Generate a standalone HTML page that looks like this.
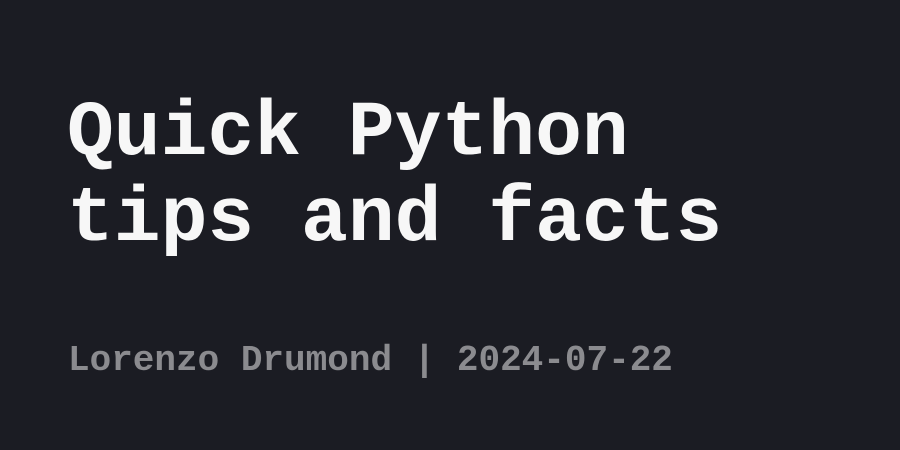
<!DOCTYPE html>
<html><head><meta charset="utf-8"><style>
html,body{margin:0;padding:0;}
body{width:900px;height:450px;background:#1b1c23;position:relative;overflow:hidden;font-family:"Liberation Mono",monospace;font-weight:bold;}
.t{position:absolute;left:67px;top:91px;font-size:78px;line-height:86px;color:#f7f7f7;white-space:pre;}
.s{position:absolute;left:68px;top:343px;font-size:36px;line-height:36px;color:#8b8b8f;white-space:pre;}
</style></head><body>
<div class="t">Quick Python
tips and facts</div>
<div class="s">Lorenzo Drumond | 2024-07-22</div>
</body></html>
